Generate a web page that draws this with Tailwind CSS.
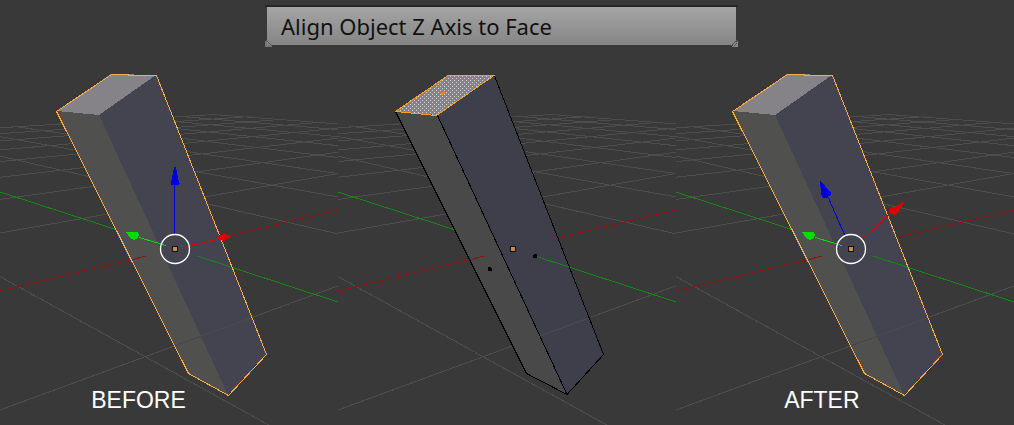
<!DOCTYPE html>
<html lang="en">
<head>
<meta charset="utf-8">
<meta name="viewport" content="width=device-width, initial-scale=1">
<title>Align Object Z Axis to Face</title>
<script src="https://cdn.jsdelivr.net/npm/@tailwindcss/browser@4"></script>
</head>
<body class="bg-[#393939]">
<svg class="absolute size-0" aria-hidden="true">
  <defs>
    <clipPath id="floor"><path d="M0 127L213 114L338 123V425H0Z"/></clipPath>
    <pattern id="dots" width="4" height="4" patternUnits="userSpaceOnUse">
      <path d="M0 0h1v1h-1zM2 2h1v1h-1z" fill="#cfcfcf"/>
    </pattern>
    <!-- perspective floor: two families of lines, vanishing at (926,70) and (-374,70) -->
    <g id="scene" fill="none" shape-rendering="crispEdges">
      <path clip-path="url(#floor)" stroke="#4d4d4d" d="M0 410L926 70M0 233L926 70M0 199.400L926 70M0 177.300L926 70M0 161.600L926 70M0 149.900L926 70M0 140.900L926 70M0 133.700L926 70M0 127.800L926 70M338 463.200L-374 70M338 233.900L-374 70M338 196.900L-374 70M338 173.600L-374 70M338 157.500L-374 70M338 145.700L-374 70M338 136.700L-374 70M338 129.600L-374 70M338 123.900L-374 70"/>
      <path stroke="#8a1414" d="M0 291L146 256M219 238L338 210"/>
      <path stroke="#168516" d="M0 192L116 229.500M197 256L338 302"/>
    </g>
    <g id="solid" shape-rendering="crispEdges">
      <path fill="#50504f" d="M57 111L99 115L228 395L188 373Z"/>
      <path fill="#444450" d="M99 115L156 75L266 354L228 395Z"/>
      <path fill="#858388" d="M57 111L111 74L156 75L99 115Z"/>
      <path fill="none" stroke="#454545" d="M174 346L202 336"/>
      <path fill="none" stroke="#4b4b4b" d="M202 336L251 318"/>
      <path fill="none" stroke="#8a1414" d="M131 260L146 256"/>
      <path fill="none" stroke="#168516" d="M197 256L234 268"/>
      <path fill="none" stroke="#ffa948" d="M56.500 111.500L111.500 74.500H128.500L129 75.500H156.500L266.500 354.500L228.500 395.500L188.500 373.500Z"/>
    </g>
    <g id="origin">
      <circle cx="175" cy="249" r="14.500" fill="none" stroke="#fff" stroke-width="1.300"/>
      <use href="#dot"/>
    </g>
    <g id="dot" shape-rendering="crispEdges">
      <path fill="#111" d="M172 246h6v6h-6z"/><path fill="#c68d43" d="M173 247h4v4h-4z"/>
    </g>
    <g id="green-arrow" shape-rendering="crispEdges">
      <path fill="none" stroke="#00dc00" d="M139 237.500L166 245.500"/>
      <path fill="#00dc00" d="M126 232.500L137 231.500L139 235L138 238L134 240L131 238.500Z"/>
    </g>
  </defs>
</svg>

<main class="relative overflow-hidden">
  <div class="grid grid-cols-3">
    <figure class="relative">
      <svg class="block w-full h-auto" viewBox="0 0 338 425" role="img" aria-label="Box with its Z axis pointing straight up">
        <use href="#scene"/><use href="#solid"/>
        <g shape-rendering="crispEdges">
          <path fill="none" stroke="#8a1414" d="M230 235.500L245 232"/>
          <path fill="none" stroke="#0000dc" d="M174.500 184V234"/>
          <path fill="#0000dc" d="M174 167h2l3 16l1 1l-2 1h-6l-2-1l1-1z"/>
          <path fill="none" stroke="#dc0000" d="M186 246.500L220 238.500"/>
          <path fill="#dc0000" d="M232 236L224 234L219 235L218 238L220 240L224 241Z"/>
        </g>
        <use href="#green-arrow"/><use href="#origin"/>
      </svg>
      <figcaption class="absolute bottom-3 left-[27%] font-['Liberation_Sans',Arial,sans-serif] text-[23px] leading-[26px] text-white">BEFORE</figcaption>
    </figure>
    <figure class="relative">
      <svg class="block w-full h-auto" viewBox="0 0 338 425" role="img" aria-label="Box in edit mode with its top face selected">
        <use href="#scene"/>
        <g shape-rendering="crispEdges">
          <path fill="#494949" d="M57 111L99 115L229 395L188 373Z"/>
          <path fill="#3f3e4b" d="M99 115L156 75L265 354L229 395Z"/>
          <path fill="#858388" d="M57 111L110 75H156L99 115Z"/>
          <path fill="url(#dots)" d="M57 111L110 75H156L99 115Z"/>
          <g fill="none">
            <path stroke="#4b4b4b" d="M202 336L251 318"/>
            <path stroke="#8a1414" d="M131 260L146 256"/>
            <path stroke="#168516" d="M197 256L234 268"/>
            <path stroke="#000" d="M57.500 111.500L188.500 373.500L229 394.500L265.500 354.500L156.500 76M99.500 115.500L229 394.500"/>
            <path stroke="#ffa010" d="M57.500 111.500L110 75.500H156L98.500 115.500Z"/>
          </g>
          <path fill="#ff8500" d="M103 92h4v2h-2v1h-2z"/>
          <path d="M150 267h2l2 2v2h-4zM196 254h3v4h-4v-3h1z"/>
        </g>
        <use href="#dot"/>
      </svg>
    </figure>
    <figure class="relative">
      <svg class="block w-full h-auto" viewBox="0 0 338 425" role="img" aria-label="Box with its Z axis aligned to the face">
        <use href="#scene"/><use href="#solid"/>
        <g shape-rendering="crispEdges">
          <path fill="none" stroke="#0000dc" d="M152.500 198L169.500 237"/>
          <path fill="#0000dc" d="M144 180L155 193V195L152 196V198H147L145 194Z"/>
          <path fill="none" stroke="#dc0000" d="M186.500 239L215 213"/>
          <path fill="#dc0000" d="M229 201L221 214L218 215L213 212L214 208L218 207Z"/>
        </g>
        <use href="#green-arrow"/><use href="#origin"/>
      </svg>
      <figcaption class="absolute bottom-3 left-[32%] font-['Liberation_Sans',Arial,sans-serif] text-[23px] leading-[26px] text-white">AFTER</figcaption>
    </figure>
  </div>
  <header class="absolute inset-x-0 top-[5px] flex justify-center">
    <div class="relative -ml-[11px] w-[473px] max-w-full border-t-2 border-[#262626]">
      <h1 class="mx-0.5 bg-linear-to-b from-[#a5a5a5] to-[#858585] px-3.5 font-['Noto_Sans',sans-serif] text-[22px] leading-[38px] whitespace-nowrap text-[#111]">Align Object Z Axis to Face</h1>
      <svg class="absolute -bottom-0.5 left-0 size-2" viewBox="0 0 8 8" shape-rendering="crispEdges" aria-hidden="true"><path fill="#777" d="M0 2h2v4h5v2H0z"/><path stroke="#555" d="M1 1L7 7"/></svg>
      <svg class="absolute right-0 -bottom-0.5 size-2" viewBox="0 0 8 8" shape-rendering="crispEdges" aria-hidden="true"><path fill="#888" d="M8 1v7H1z"/><path stroke="#555" d="M7 1L1 7M7 4L4 7"/></svg>
    </div>
  </header>
</main>
</body>
</html>
